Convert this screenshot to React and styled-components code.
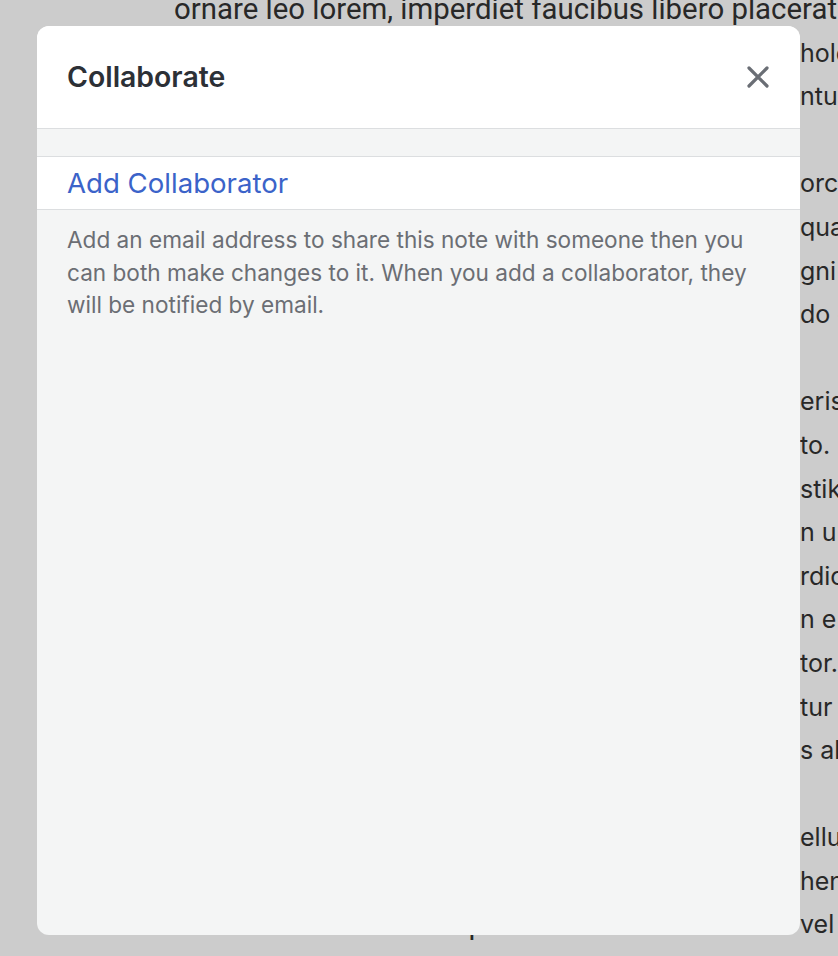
import * as React from "react";
import styled, { createGlobalStyle } from "styled-components";

const GlobalStyle = createGlobalStyle`
  html, body {
    margin: 0;
    padding: 0;
  }
  body {
    background: #cccccc;
    overflow: hidden;
  }
`;

const Page = styled.div`
  position: relative;
  width: 838px;
  height: 956px;
  overflow: hidden;
  background: #cccccc;
`;

const Note = styled.div`
  margin-top: -12px;
  padding-left: 174px;
  font-family: Roboto, "Liberation Sans", sans-serif;
  font-size: 29.4px;
  line-height: 43.6px;
  color: #282828;
`;

const NoteLine = styled.div`
  display: ${(p) => (p.$full ? "block" : "grid")};
  grid-template-columns: 626px auto;
  white-space: nowrap;
  height: 43.6px;
  overflow: hidden;
`;

const Hidden = styled.span`
  overflow: hidden;
`;

const Fragment = styled.span`
  font-family: Inter, "Liberation Sans", sans-serif;
  font-size: 25px;
`;

const Overlay = styled.div`
  position: absolute;
  left: 37px;
  top: 26px;
  width: 763px;
  height: 909px;
  display: flex;
  flex-direction: column;
  background: #f4f5f5;
  border-radius: 12px;
  overflow: hidden;
  font-family: Inter, "Liberation Sans", sans-serif;
`;

const Header = styled.div`
  height: 103px;
  flex: none;
  display: flex;
  align-items: center;
  justify-content: space-between;
  padding: 0 30px 1px;
  background: #ffffff;
  border-bottom: 1px solid #dcdee0;
  box-sizing: border-box;
`;

const Title = styled.h2`
  margin: 0;
  font-size: 28.4px;
  font-weight: 600;
  color: #2c3036;
`;

const Close = styled.button`
  border: 0;
  background: none;
  padding: 0;
  margin-right: -1px;
  width: 26px;
  height: 26px;
  display: flex;
  align-items: center;
  justify-content: center;
  cursor: pointer;
`;

const Spacer = styled.div`
  height: 28px;
  flex: none;
  border-bottom: 1px solid #dcdee0;
  box-sizing: border-box;
`;

const AddRow = styled.div`
  height: 53px;
  flex: none;
  display: flex;
  align-items: center;
  padding: 0 30px;
  background: #ffffff;
  border-bottom: 1px solid #dcdee0;
  box-sizing: border-box;
`;

const AddLink = styled.a`
  font-size: 27.6px;
  color: #3b63c9;
  text-decoration: none;
  cursor: pointer;
`;

const Help = styled.p`
  margin: 0;
  padding: 14px 40px 0 30px;
  font-size: 22.6px;
  line-height: 32.5px;
  color: #6b6e74;
`;

const lines = [
  ["", "ornare leo lorem, imperdiet faucibus libero placerat"],
  ["quisque dapibus velit non", "hole"],
  ["mauris vitae ante ac", "ntur"],
  ["", ""],
  ["donec congue arcu sit amet", "orc"],
  ["aliquam erat volutpat nam", "qua"],
  ["sed lacinia nulla eget", "gni"],
  ["vivamus porta commo", "do c"],
  ["", ""],
  ["nullam ultricies sceler", "eris"],
  ["praesent iaculis jus", "to."],
  ["maecenas tempor ve", "stik"],
  ["curabitur vehicula quis", "n u"],
  ["fusce quis lorem impe", "rdic"],
  ["suspendisse sollicitudin", "n e"],
  ["aenean mattis auc", "tor."],
  ["pellentesque consec", "tur"],
  ["morbi pulvinar nunc e", "s al"],
  ["", ""],
  ["integer lobortis ph", "ellu"],
  ["etiam malesuada vel, sed", "hen"],
  ["cras interdum mauris quis eros", "vel"],
];

function CloseIcon() {
  return (
    <svg width="22" height="22" viewBox="0 0 22 22">
      <path
        d="M2 2 L20 20 M20 2 L2 20"
        stroke="#6a6e75"
        strokeWidth="3.2"
        strokeLinecap="round"
      />
    </svg>
  );
}

export default function App() {
  return (
    <Page>
      <GlobalStyle />
      <Note>
        {lines.map(([hidden, shown], i) =>
          i === 0 ? (
            <NoteLine key={i} $full>
              {shown}
            </NoteLine>
          ) : (
            <NoteLine key={i}>
              <Hidden>{hidden}</Hidden>
              <Fragment>{shown}</Fragment>
            </NoteLine>
          )
        )}
      </Note>

      <Overlay>
        <Header>
          <Title>Collaborate</Title>
          <Close aria-label="Close">
            <CloseIcon />
          </Close>
        </Header>
        <Spacer />
        <AddRow>
          <AddLink>Add Collaborator</AddLink>
        </AddRow>
        <Help>
          Add an email address to share this note with someone then you can
          both make changes to it. When you add a collaborator, they will be
          notified by email.
        </Help>
      </Overlay>
    </Page>
  );
}
